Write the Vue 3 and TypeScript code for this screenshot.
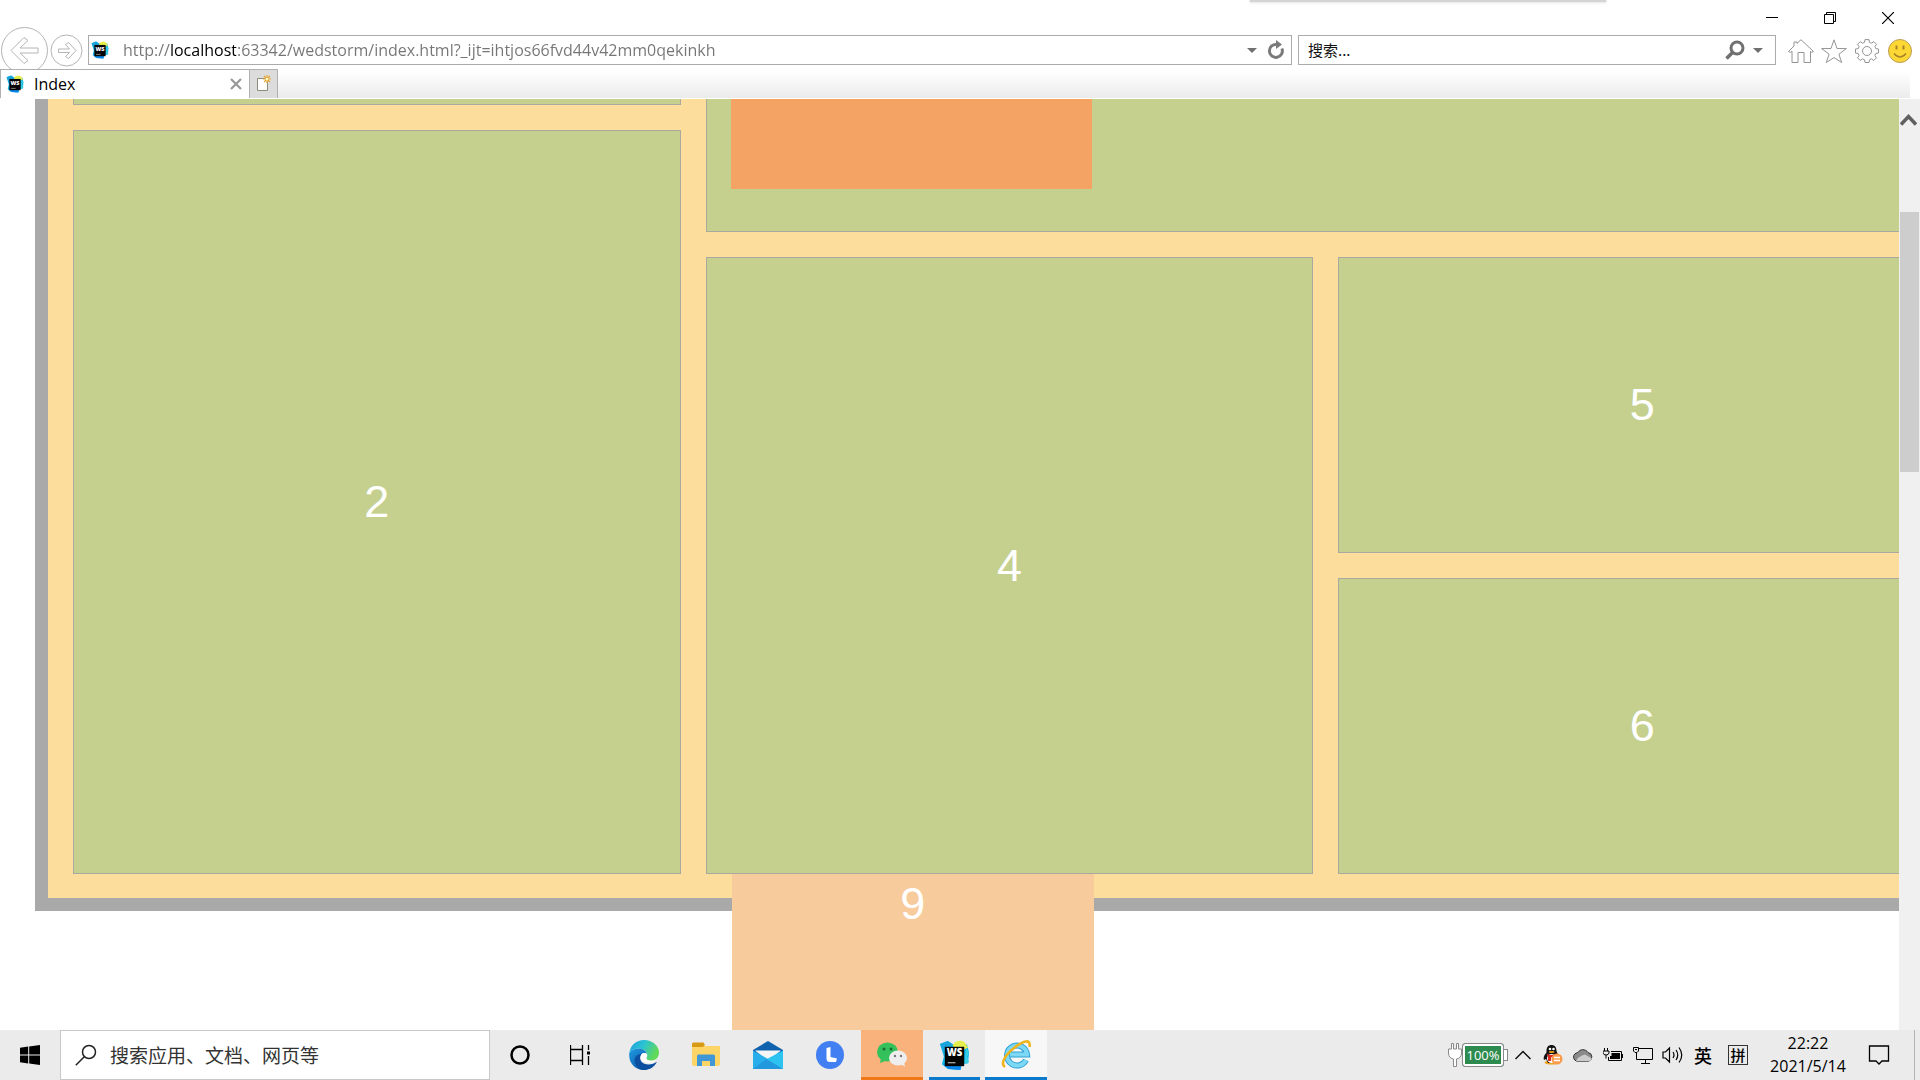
<script setup lang="ts">
import { ref } from 'vue'

const address = ref('http://localhost:63342/wedstorm/index.html?_ijt=ihtjos66fvd44v42mm0qekinkh')
const query = ref('')
const taskQuery = ref('')
</script>

<template>
  <div class="desktop">
    <svg class="symbols" width="0" height="0" aria-hidden="true">
      <defs>
        <symbol id="webstorm" viewBox="0 0 32 32">
          <path d="M1 4 9 1l6 4 6-3 8 3 2 8-1 11-6 1-2 6-13-1-6-5 2-8z" fill="#10b5e8" />
          <path d="M1 4 9 1l6 4-8 12z" fill="#1aa4dc" />
          <path d="M5 26l3-6h16l-2 11-12-1z" fill="#0a86ec" />
          <path d="M14 6c2-5 9-7 13-3l3 5-10 4z" fill="#e6ee4c" />
          <path d="M28 8l3 5-2 4 2 6-5 2z" fill="#37cde4" />
          <path d="M6 7h20v20H6z" fill="#050505" />
          <text x="16" y="17" text-anchor="middle" font-family="Open Sans, sans-serif" font-weight="800" font-size="10" fill="#fff">WS</text>
          <path d="M9 23h8v1H9z" fill="#ddd" />
        </symbol>
      </defs>
    </svg>

    <header class="browser">
      <div class="titlebar">
        <span class="drop-shade"></span>
        <button class="win" type="button" aria-label="最小化">
          <svg width="12" height="12" viewBox="0 0 12 12"><path d="M0 5.500h12" stroke="#000" /></svg>
        </button>
        <button class="win" type="button" aria-label="还原">
          <svg width="12" height="12" viewBox="0 0 12 12" fill="none" stroke="#000"><path d="M.5 2.500h9v9h-9zM2.500 2.500v-2h9v9h-2" /></svg>
        </button>
        <button class="win" type="button" aria-label="关闭">
          <svg width="12" height="12" viewBox="0 0 12 12"><path d="M0 0l12 12M12 0 0 12" stroke="#000" stroke-width="1.200" /></svg>
        </button>
      </div>

      <div class="navbar">
        <button class="nav-button" type="button" aria-label="后退">
          <svg width="48" height="48" viewBox="0 0 48 48" fill="none" stroke="#b4b4b4">
            <circle cx="24.500" cy="23.500" r="23" />
            <path d="M11 23.500 24 10.500l4 3-8 7.500h18v5H20l8 7.500-4 3z" />
          </svg>
        </button>
        <button class="nav-button forward" type="button" aria-label="前进">
          <svg width="34" height="48" viewBox="0 0 34 48" fill="none" stroke="#b4b4b4">
            <circle cx="16.500" cy="23.500" r="15.500" />
            <path d="M26 23.500 18.500 15.500l-3 2 4 4.500h-11v3.500h11l-4 4 3 2z" />
          </svg>
        </button>
        <form class="field address" @submit.prevent>
          <svg width="18" height="18"><use href="#webstorm" /></svg>
          <input v-model="address" class="url" type="text" aria-label="地址" spellcheck="false" />
          <button type="button" aria-label="显示地址列表">
            <svg width="10" height="5" viewBox="0 0 10 5"><path d="M0 0h10L5 5z" fill="#707070" /></svg>
          </button>
          <button class="reload" type="button" aria-label="刷新">
            <svg width="18" height="20" viewBox="0 0 18 20">
              <path d="M10 4.500a6.500 6.500 0 1 0 4.900 4" fill="none" stroke="#7a7a7a" stroke-width="3" />
              <path d="M9 0l6 4.500L9 9z" fill="#7a7a7a" />
            </svg>
          </button>
        </form>
        <form class="field search" @submit.prevent>
          <input v-model="query" type="text" placeholder="搜索..." aria-label="搜索" />
          <button type="submit" aria-label="搜索">
            <svg width="20" height="20" viewBox="0 0 20 20" fill="none" stroke="#707070">
              <circle cx="12" cy="8" r="6" stroke-width="3" /><path d="M8 12l-6.500 6.500" stroke-width="3.500" />
            </svg>
          </button>
          <button class="provider" type="button" aria-label="搜索提供程序">
            <svg width="10" height="5" viewBox="0 0 10 5"><path d="M0 0h10L5 5z" fill="#707070" /></svg>
          </button>
        </form>
        <div class="tools">
          <button type="button" aria-label="主页">
            <svg width="26" height="24" viewBox="0 0 26 24" fill="none" stroke="#949494">
              <path d="M.5 12.500 6 7V3h3v1.500L13 .7l12.500 11.800-2 .8-1-1V23.500H16v-10h-6v10H4V12.300l-1.500 1z" />
            </svg>
          </button>
          <button type="button" aria-label="收藏夹">
            <svg width="26" height="24" viewBox="0 0 26 24" fill="none" stroke="#949494">
              <path d="M13 .8l3 8.700 9.400.1-7.500 5.600 2.800 8.300L13 18.600l-7.700 4.900 2.800-8.300L.6 9.600 10 9.500z" />
            </svg>
          </button>
          <button type="button" aria-label="工具">
            <svg width="24" height="24" viewBox="0 0 24 24" fill="none" stroke="#949494">
              <path d="M9.500 3.300 10 .6h4l.5 2.700 2 .9 2.300-1.600 2.700 2.700-1.600 2.300.9 2 2.700.4v4l-2.700.5-.9 2 1.600 2.300-2.700 2.700-2.300-1.600-2 .9-.5 2.700h-4l-.5-2.700-2-.9-2.300 1.600-2.700-2.700 1.600-2.300-.9-2L.5 14v-4l2.700-.4.9-2-1.600-2.300 2.700-2.700 2.300 1.600z" />
              <circle cx="12" cy="12" r="4.500" />
            </svg>
          </button>
          <button type="button" aria-label="反馈">
            <svg width="24" height="24" viewBox="0 0 24 24">
              <circle cx="12" cy="12" r="11.500" fill="#fdd835" stroke="#b99b58" />
              <path d="M8.500 6.500v4M15.500 6.500v4" stroke="#a8832a" stroke-width="2" />
              <path d="M6 14.500q6 7 12 0" fill="none" stroke="#a8832a" stroke-width="1.600" />
            </svg>
          </button>
        </div>
      </div>

      <div class="tabs">
        <div class="tab">
          <svg width="18" height="18"><use href="#webstorm" /></svg>
          <span class="tab-title">Index</span>
          <button type="button" aria-label="关闭选项卡">
            <svg width="12" height="12" viewBox="0 0 12 12"><path d="M1 1l10 10M11 1 1 11" stroke="#999" stroke-width="2.200" /></svg>
          </button>
        </div>
        <button class="new-tab" type="button" aria-label="新建选项卡">
          <svg width="16" height="18" viewBox="0 0 16 18">
            <path d="M1.500 3.500h10v12h-10z" fill="#fff" stroke="#8c8c78" />
            <path d="M11 0v8M7 4h8M8 1l6 6M14 1 8 7" stroke="#e5a52c" stroke-width="1.200" />
            <circle cx="11" cy="4" r="1.500" fill="#fff3c0" />
          </svg>
        </button>
        <div class="tab-space"></div>
      </div>
    </header>

    <div class="window">
      <main class="page">
        <div class="board">
          <div class="column">
            <section class="cell cut first"></section>
            <section class="cell grow">2</section>
          </div>
          <div class="wide">
            <section class="cell cut banner"><div class="block"></div></section>
            <div class="pair">
              <section class="cell tall">4<div class="float">9</div></section>
              <div class="stack">
                <section class="cell">5</section>
                <section class="cell">6</section>
              </div>
            </div>
          </div>
        </div>
      </main>
      <aside class="scrollbar">
        <svg width="17" height="14" viewBox="0 0 17 14"><path d="M1 11.500l7.500-8 7.500 8" fill="none" stroke="#606060" stroke-width="3.500" /></svg>
        <div class="thumb"></div>
      </aside>
    </div>

    <footer class="taskbar">
      <button class="slot small" type="button" aria-label="开始">
        <svg width="20" height="20" viewBox="0 0 20 20"><path d="M0 2.800 8.200 1.600v7.900H0zM9.200 1.500 20 0v9.500H9.200zM0 10.500h8.200v7.900L0 17.200zM9.200 10.500H20V20L9.200 18.500z" /></svg>
      </button>
      <label class="task-search">
        <svg width="22" height="22" viewBox="0 0 22 22" fill="none" stroke="#222" stroke-width="1.500"><circle cx="14" cy="8" r="6.500" /><path d="M9.500 12.500.8 21.200" /></svg>
        <input v-model="taskQuery" type="text" placeholder="搜索应用、文档、网页等" aria-label="搜索应用、文档、网页等" />
      </label>
      <button class="slot small" type="button" aria-label="Cortana">
        <svg width="20" height="20" viewBox="0 0 20 20"><circle cx="10" cy="10" r="8.500" fill="none" stroke="#000" stroke-width="2.500" /></svg>
      </button>
      <button class="slot small" type="button" aria-label="任务视图">
        <svg width="20" height="20" viewBox="0 0 20 20" fill="none" stroke="#000"><path d="M.5 0v4.500h12V0M.5 20v-4.500h12V20M.5 4.500v11M12.500 4.500v11M18.500 0v5M18.500 11v9" stroke-width="1.300" /><path d="M17 6.500h3v3h-3z" fill="#000" stroke="none" /></svg>
      </button>
      <div class="apps">
        <button class="slot" type="button" aria-label="Edge">
          <svg width="30" height="30" viewBox="0 0 30 30">
            <defs>
              <linearGradient id="edge-top" x1="0" y1="0" x2="1" y2=".4"><stop offset="0" stop-color="#1b9de2" /><stop offset=".5" stop-color="#2bc3d2" /><stop offset="1" stop-color="#62d957" /></linearGradient>
              <linearGradient id="edge-left" x1="0" y1="0" x2=".6" y2="1"><stop offset="0" stop-color="#1e9be0" /><stop offset="1" stop-color="#0f5cae" /></linearGradient>
            </defs>
            <path d="M.3 13C1.500 5 7.500 0 15 0c8.500 0 15 6 15 12.500 0 5-3.500 8-8 8-4 0-5.500-1.700-4.500-3.200C20 13 15.500 8.500 10 8.500 5.500 8.500 2 10.500.3 13z" fill="url(#edge-top)" />
            <path d="M.3 13C2 10.500 5.500 8.500 10 8.500c4 0 7.500 2.500 8 5.500-3-2.500-7 0-7 4.500 0 5 4 9.500 7.500 11.100C9 32-1 25 .3 13z" fill="url(#edge-left)" />
            <path d="M12.500 13.800c-4 6.200 1 10.700 7 10.700 3.500 0 6-1.200 8.500-2.700-2.500 5-7 8.200-12.500 8.200-6 0-10-5-10-9.500 0-3.500 3-6.500 7-6.700z" fill="#0c4fa0" />
            <path d="M18 14c-4-2.500-7 .7-6.200 4 1 4.500 9 6.500 15.700 2.500-4.500 1.300-10 .3-10-2.200 0-1.300 1.300-2 .5-4.300z" fill="#fff" />
          </svg>
        </button>
        <button class="slot" type="button" aria-label="文件资源管理器">
          <svg width="28" height="26" viewBox="0 0 28 26">
            <path d="M0 4h28v18q0 2-2 2H2q-2 0-2-2z" fill="#fdd567" />
            <path d="M0 2q0-1.500 1.500-1.500h10L13 3l-2 2H0z" fill="#d99a13" />
            <path d="M5 24V14q0-1.500 1.500-1.500h15Q23 12.500 23 14v10h-5v-5h-8v5z" fill="#3f98d5" />
          </svg>
        </button>
        <button class="slot" type="button" aria-label="邮件">
          <svg width="30" height="28" viewBox="0 0 30 28">
            <path d="M0 9 15 0l15 9v6H0z" fill="#0f62ad" /><path d="M2 9.500h26L15 20z" fill="#f5f5f5" />
            <path d="M0 9.500 15 18l15 10H0z" fill="#28aeea" /><path d="M30 9.500 13 18.500 30 28z" fill="#2dc3f1" /><path d="M13.500 18 30 28H0z" fill="#2298de" />
          </svg>
        </button>
        <button class="slot" type="button" aria-label="联想">
          <svg width="28" height="28" viewBox="0 0 28 28"><circle cx="14" cy="14" r="14" fill="#427ff2" /><path d="M10.500 7l4-1v10l6.500 1.500-1 3.500h-6q-3.500 0-3.500-3.500z" fill="#fff" /></svg>
        </button>
        <button class="slot wechat" type="button" aria-label="微信">
          <svg width="30" height="26" viewBox="0 0 30 26">
            <ellipse cx="10.500" cy="10" rx="10.500" ry="9.500" fill="#34c15c" /><path d="M4 16l-1 5 5-2z" fill="#34c15c" />
            <circle cx="7" cy="7" r="1.500" fill="#196b32" /><circle cx="14" cy="7" r="1.500" fill="#196b32" />
            <ellipse cx="21" cy="16" rx="9" ry="7.500" fill="#eee" /><path d="M24 22l4 3-1-5z" fill="#eee" />
            <circle cx="18" cy="14" r="1.200" fill="#777" /><circle cx="24" cy="14" r="1.200" fill="#777" />
          </svg>
        </button>
        <button class="slot running" type="button" aria-label="WebStorm"><svg width="31" height="31"><use href="#webstorm" /></svg></button>
        <button class="slot running active" type="button" aria-label="Internet Explorer">
          <svg width="30" height="30" viewBox="0 0 30 30" fill="none">
            <path d="M25 20a10 10 0 1 1 1-5.500H9" stroke="#2ea1d3" stroke-width="6" />
            <path d="M25 20a10 10 0 1 1 1-5.500H9" stroke="#7dd8f6" stroke-width="4" />
            <path d="M4 27C-1 24 4 15 13 8S30-2 28.500 7" stroke="#efb51c" stroke-width="2.600" />
          </svg>
        </button>
      </div>

      <div class="tray">
        <div class="power">
          <svg width="14" height="24" viewBox="0 0 14 24" fill="#fff" stroke="#8a8a8a"><path d="M3.500.5h2V6h3V.5h2V6h3v4q0 5-5 6v7.500h-3V16q-5-1-5-6V6h3z" /></svg>
          <span class="level">100%</span><span class="nub"></span>
        </div>
        <button type="button" aria-label="显示隐藏的图标">
          <svg width="16" height="10" viewBox="0 0 16 10"><path d="M.5 9 8 1.500 15.500 9" fill="none" stroke="#111" stroke-width="1.500" /></svg>
        </button>
        <button type="button" aria-label="QQ">
          <svg width="20" height="20" viewBox="0 0 20 20">
            <ellipse cx="8.500" cy="17.500" rx="7" ry="2" fill="#f0a51d" />
            <path d="M3.500 6C3.500 2 5.500 0 8.500 0s5 2 5 6l2.500 6-1 3-2-1-1 4h-7l-2-4-2 1c-1-3 1-6 2.500-7.500z" fill="#111" />
            <ellipse cx="8.500" cy="13.500" rx="4.500" ry="4.500" fill="#fff" />
            <path d="M3.500 8.500q5 3 10.500 0v2.500q-3 1.500-6 1.300V16H5v-4.500z" fill="#d92b20" />
            <circle cx="7" cy="4" r="1.300" fill="#fff" /><circle cx="10.500" cy="4" r="1.300" fill="#fff" /><ellipse cx="8.700" cy="7" rx="3" ry="1" fill="#f0a51d" />
            <circle cx="14" cy="14" r="5.500" fill="#fb9b4b" /><path d="M11 12.500h6M11 15.500h6" stroke="#fff" stroke-width="1.300" />
          </svg>
        </button>
        <button type="button" aria-label="OneDrive">
          <svg width="20" height="14" viewBox="0 0 20 14" stroke="#333"><path d="M5 13.300a4.300 4.300 0 0 1-.3-8.600A6 6 0 0 1 15 4.500a4.500 4.500 0 0 1 .5 8.800z" fill="#8a8a8a" /><path d="M3 13q2-4 6-5.500l3-1 7 4q-.7 2.500-3.500 2.800H5z" fill="#ccc" stroke="none" /></svg>
        </button>
        <button type="button" aria-label="电池">
          <svg width="20" height="14" viewBox="0 0 20 14" fill="none" stroke="#000"><path d="M8 3.500h10.500v9h-13V9" /><path d="M8.500 5H17v6H7V8h1.500zM19 6h1v4h-1z" fill="#000" stroke="none" /><path d="M1.500 0v3M4.500 0v3M0 3h6v2q-.5 2-3 2t-3-2zM3 7v3.500" /></svg>
        </button>
        <button type="button" aria-label="网络">
          <svg width="20" height="17" viewBox="0 0 20 17" fill="none" stroke="#000"><path d="M5.500 1.500h14v11h-14M3.500 5v7.500h3M12.500 13v3M8 16.500h9M.5.500h5V4L4 5.500H2L.5 4zM2 2.500h2" /></svg>
        </button>
        <button type="button" aria-label="音量">
          <svg width="22" height="18" viewBox="0 0 22 18" fill="none" stroke="#000" stroke-width="1.200"><path d="M1 6h2.500L7.500 2v14l-4-4H1zM11 6q2 3 0 6M14 4q3.500 5 0 10M17 1.500q5.500 7.500 0 15" /></svg>
        </button>
        <button type="button">英</button>
        <button class="ime" type="button"><span>拼</span></button>
        <button class="clock" type="button"><time>22:22</time><time>2021/5/14</time></button>
        <button class="notice" type="button" aria-label="通知">
          <svg width="22" height="20" viewBox="0 0 22 20"><path d="M1.500 1h19v15h-6.500l-3 3-3-3H1.500z" fill="none" stroke="#000" stroke-width="1.300" /></svg>
        </button>
        <button class="peek" type="button" aria-label="显示桌面"></button>
      </div>
    </footer>
  </div>
</template>

<style>
body {
  margin: 0;
  background: #fff;
}
</style>

<style scoped>
* {
  box-sizing: border-box;
}

.desktop {
  display: flex;
  flex-direction: column;
  height: 100vh;
  overflow: hidden;
  font: 16px/20px "Open Sans", "Noto Sans CJK SC", sans-serif;
  color: #000;
}

.symbols {
  position: absolute;
}

button {
  display: flex;
  align-items: center;
  justify-content: center;
  padding: 0;
  border: 0;
  background: none;
  font: inherit;
  color: inherit;
}

input {
  flex: 1;
  min-width: 0;
  padding: 0;
  border: 0;
  outline: 0;
  background: none;
  font: inherit;
}

svg {
  flex: none;
}

/* browser frame */
.titlebar {
  display: flex;
  justify-content: flex-end;
  height: 27px;
  padding: 8px 3px 0 0;
}

.win {
  width: 58px;
  height: 20px;
}

.drop-shade {
  position: absolute;
  top: -10px;
  right: 314px;
  width: 356px;
  height: 12px;
  background: #d4d4d4;
  box-shadow: 0 0 3px #ccc;
}

.navbar {
  display: flex;
  height: 42px;
  overflow: hidden;
}

.nav-button {
  align-self: flex-start;
}

.forward {
  margin: 0 4px 0 2px;
}

.field {
  display: flex;
  align-items: center;
  height: 30px;
  margin-top: 8px;
  border: 1px solid #ababab;
}

.address {
  flex: 1;
  padding: 0 6px 0 2px;
}

.url {
  margin-left: 14px;
  background: linear-gradient(90deg, #757575 47px, #000 47px, #000 113px, #757575 113px);
  background-clip: text;
  -webkit-text-fill-color: transparent;
}

.reload {
  margin-left: 10px;
}

.search {
  width: 478px;
  margin-left: 6px;
  padding: 0 12px 0 9px;
}

.search input {
  font: 15px/20px "Noto Sans CJK SC", sans-serif;
}

input::placeholder {
  color: #111;
  opacity: 1;
}

.provider {
  margin-left: 8px;
}

.tools {
  display: flex;
  height: 24px;
  margin: 12px 4px 0 8px;
}

.tools button {
  width: 33px;
}

.tabs {
  display: flex;
  height: 30px;
}

.tab {
  display: flex;
  align-items: center;
  width: 250px;
  height: 29px;
  padding: 0 7px 0 5px;
  border: 1px solid #b0b0b0;
  border-bottom: 0;
}

.tab-title {
  flex: 1;
  margin-left: 10px;
}

.new-tab {
  width: 28px;
  height: 29px;
  border: 1px solid #b0b0b0;
  border-width: 1px 1px 0 0;
  background: #dcdcdc;
}

.tab-space {
  flex: 1;
  height: 29px;
  margin-right: 10px;
  background: linear-gradient(#fff 3px, #ebebeb);
}

/* web page */
.window {
  display: flex;
  flex: 1;
  min-height: 0;
}

.page {
  flex: 1;
  min-width: 0;
  overflow: hidden;
}

.board {
  display: grid;
  grid-template-columns: 1fr 2fr;
  grid-template-columns: calc((100% - 50px) / 3) 1fr;
  gap: 25px;
  margin: 0 -85px 0 35px;
  padding: 0 25px 24px;
  border: 13px solid #a9a9a9;
  border-top: 0;
  background: #fcdd9b;
}

.column,
.wide,
.stack {
  display: flex;
  flex-direction: column;
  gap: 25px;
}

.pair {
  display: grid;
  grid-template-columns: 1fr 1fr;
  gap: 25px;
}

.cell {
  display: flex;
  align-items: center;
  justify-content: center;
  min-height: 296px;
  border: 1px solid #a9a99f;
  background: #c5d08e;
  font: 45px/60px "Liberation Sans", sans-serif;
  color: #fff;
}

.cut {
  align-items: flex-start;
  justify-content: flex-start;
  min-height: 0;
  border-top: 0;
}

.first {
  height: 6px;
}

.grow {
  flex: 1;
}

.banner {
  height: 133px;
  padding-left: 24px;
}

.block {
  width: 361px;
  height: 90px;
  background: #f4a364;
}

.tall {
  position: relative;
}

.float {
  position: absolute;
  top: 100%;
  left: 25px;
  width: 362px;
  height: 240px;
  margin-top: 1px;
  background: #f8cb9c;
  text-align: center;
}

.scrollbar {
  display: flex;
  flex-direction: column;
  gap: 85px;
  width: 21px;
  padding: 14px 1px 0;
  background: #f0f0f0;
}

.thumb {
  height: 260px;
  background: #cdcdcd;
}

/* taskbar */
.taskbar {
  display: flex;
  height: 50px;
  background: #ebebeb;
}

.slot {
  width: 62px;
}

.small {
  width: 60px;
}

.task-search {
  display: flex;
  align-items: center;
  width: 430px;
  padding: 0 14px;
  border: 1px solid #c8c8c8;
  background: #fff;
}

.task-search input {
  margin-left: 13px;
  font: 19px/28px "Noto Sans CJK SC", sans-serif;
}

.task-search input::placeholder {
  color: #333;
}

.apps {
  display: flex;
  margin-left: 3px;
}

.wechat {
  background: #fab27c;
  box-shadow: inset 0 -3px #f07818;
}

.running {
  background: linear-gradient(#0b79cc, #0b79cc) center bottom / 51px 3px no-repeat;
}

.active {
  background-color: #f7f7f7;
  background-size: 100% 3px;
}

.tray {
  display: flex;
  align-items: center;
  margin-left: auto;
}

.tray button {
  width: 30px;
  height: 50px;
  font: 500 18px/24px "Noto Sans CJK SC", sans-serif;
}

.power {
  display: flex;
  align-items: center;
}

.level {
  width: 42px;
  height: 24px;
  border: 1px solid #8a8a8a;
  border-radius: 3px;
  box-shadow: inset 0 0 0 2px #fff;
  background: #2e8b4f;
  font-size: 13px;
  line-height: 22px;
  text-align: center;
  color: #fff;
}

.nub {
  width: 4px;
  height: 12px;
  border: 1px solid #8a8a8a;
  border-left: 0;
  background: #fff;
}

.tray .ime {
  width: 40px;
}

.ime span {
  width: 20px;
  height: 20px;
  border: 1px solid #333;
  font-size: 15px;
  line-height: 18px;
}

.tray .clock {
  flex-direction: column;
  width: 100px;
  font: 16px/23px "Open Sans", sans-serif;
}

.tray .notice {
  width: 42px;
}

.tray .peek {
  width: 6px;
  margin-left: 14px;
  border-left: 1px solid #b4b4b4;
}
</style>
